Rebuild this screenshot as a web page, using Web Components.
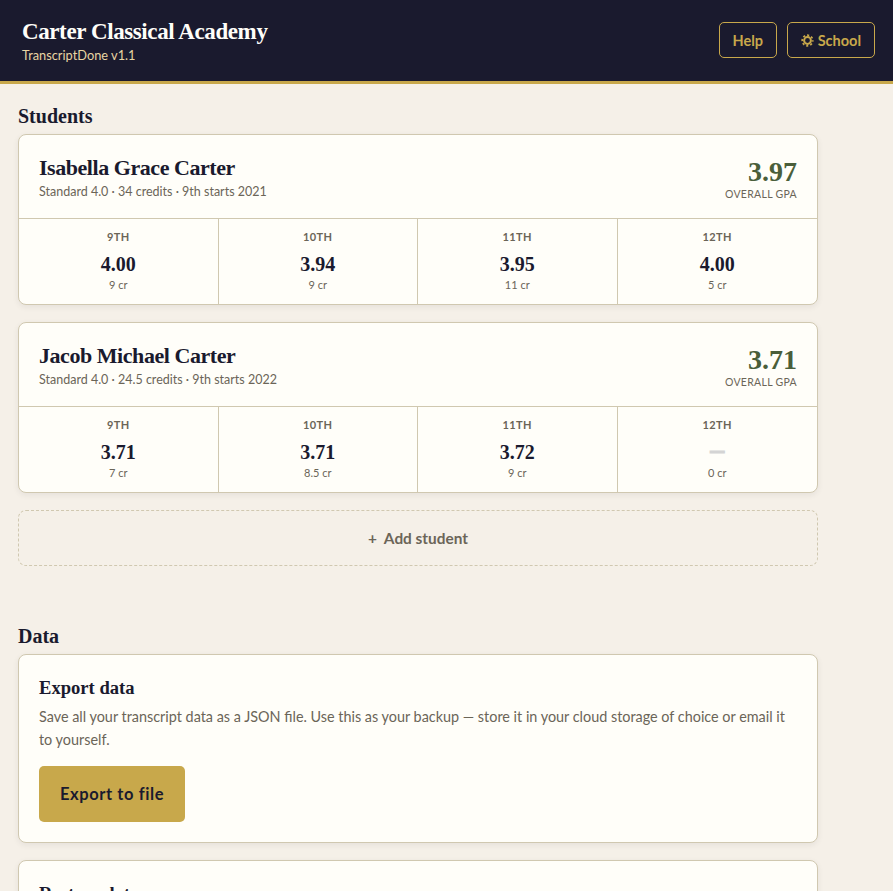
<!DOCTYPE html>
<html lang="en">
<head>
<meta charset="utf-8">
<title>TranscriptDone</title>
<style>
html,body{margin:0;padding:0;height:891px;overflow:hidden;background:#f5f0e8}
body{font-family:Lato,"Noto Sans",sans-serif;color:#1a1a2e}
</style>
</head>
<body>
<app-shell>
  <app-header slot="header" name="Carter Classical Academy" sub="TranscriptDone v1.1">
    <hdr-btn>Help</hdr-btn>
    <hdr-btn><gear-icon></gear-icon> School</hdr-btn>
  </app-header>
  <sec-title>Students</sec-title>
  <student-card name="Isabella Grace Carter" meta="Standard 4.0 · 34 credits · 9th starts 2021" gpa="3.97">
    <year-cell label="9TH" gpa="4.00" cr="9 cr"></year-cell>
    <year-cell label="10TH" gpa="3.94" cr="9 cr"></year-cell>
    <year-cell label="11TH" gpa="3.95" cr="11 cr"></year-cell>
    <year-cell label="12TH" gpa="4.00" cr="5 cr"></year-cell>
  </student-card>
  <student-card name="Jacob Michael Carter" meta="Standard 4.0 · 24.5 credits · 9th starts 2022" gpa="3.71">
    <year-cell label="9TH" gpa="3.71" cr="7 cr"></year-cell>
    <year-cell label="10TH" gpa="3.71" cr="8.5 cr"></year-cell>
    <year-cell label="11TH" gpa="3.72" cr="9 cr"></year-cell>
    <year-cell label="12TH" gpa="—" cr="0 cr" empty></year-cell>
  </student-card>
  <add-student>+&nbsp; Add student</add-student>
  <sec-title gap>Data</sec-title>
  <data-card heading="Export data">
    Save all your transcript data as a JSON file. Use this as your backup — store it in your cloud storage of choice or email it to yourself.
    <gold-btn slot="action">Export to file</gold-btn>
  </data-card>
  <data-card heading="Restore data"></data-card>
</app-shell>
<script>
const SERIF='"Liberation Serif","Times New Roman",serif';
function def(tag,html,init){
  customElements.define(tag,class extends HTMLElement{
    constructor(){super();this.attachShadow({mode:'open'}).innerHTML=html}
    connectedCallback(){
      this.shadowRoot.querySelectorAll('[data-a]').forEach(n=>{n.textContent=this.getAttribute(n.dataset.a)||''});
      if(init)init.call(this);
    }
  });
}
def('app-shell',`<style>
:host{display:block}
main{padding:20px 75px 0 18px;display:flex;flex-direction:column}
</style><slot name="header"></slot><main><slot></slot></main>`);
def('app-header',`<style>
:host{display:flex;align-items:center;justify-content:space-between;height:81px;box-sizing:content-box;background:#1a1a2e;border-bottom:3px solid #c8a84b;padding:0 18px 0 22px}
.t{font:700 23px/28px ${SERIF};letter-spacing:-.4px;color:#fffef9}
.s{font-size:12.8px;line-height:18px;color:#e8d5a3;margin-top:0}
.b{display:flex;gap:10px;margin-top:-1px}
</style><div><div class="t" data-a="name"></div><div class="s" data-a="sub"></div></div><div class="b"><slot></slot></div>`);
def('hdr-btn',`<style>
:host{display:flex;align-items:center;height:36px;box-sizing:border-box;padding:0 13px;border:1px solid #c8a84b;border-radius:5px;color:#c8a84b;font-size:14.5px;font-weight:700;white-space:pre}
</style><slot></slot>`);
def('gear-icon',`<style>
:host{display:inline-flex;width:13px;height:13px}
svg{width:13px;height:13px;display:block}
</style><svg viewBox="0 0 13 13" fill="none" stroke="#c8a84b"><circle cx="6.5" cy="6.5" r="3.4" stroke-width="2"/><circle cx="6.5" cy="6.5" r="5.3" stroke-width="1.7" stroke-dasharray="2.1 2.06" stroke-dashoffset="1"/></svg>`);
def('sec-title',`<style>
:host{display:block;font:700 20px/24px ${SERIF};color:#1a1a2e;margin-bottom:6px}
:host([gap]){margin-top:58px}
</style><slot></slot>`);
def('student-card',`<style>
:host{display:block;background:#fffef9;border:1px solid #d0c8b0;border-radius:8px;box-shadow:0 2px 6px rgba(26,26,46,.07);margin-bottom:17px;overflow:hidden}
.h{display:flex;justify-content:space-between;height:84px;box-sizing:border-box;padding:19px 20px 0;border-bottom:1px solid #d0c8b0}
.n{font:700 22px/28px ${SERIF};letter-spacing:-.45px;color:#1a1a2e}
.m{font-size:12.5px;line-height:18px;color:#6b6558;margin-top:1px}
.r{text-align:right}
.g{font:700 28px/30px ${SERIF};color:#4a5e3a;margin-top:3px}
.l{font-size:10.5px;line-height:14px;letter-spacing:.3px;color:#6b6558}
.y{display:grid;grid-template-columns:repeat(4,1fr)}
</style><div class="h"><div><div class="n" data-a="name"></div><div class="m" data-a="meta"></div></div><div class="r"><div class="g" data-a="gpa"></div><div class="l">OVERALL GPA</div></div></div><div class="y"><slot></slot></div>`);
def('year-cell',`<style>
:host{display:block;text-align:center;border-right:1px solid #d0c8b0;padding:10px 0 12px;height:85px;box-sizing:border-box}
:host(:last-child){border-right:0}
.l{font-size:11px;line-height:16px;font-weight:700;letter-spacing:.4px;color:#6b6558}
.g{font:700 20px/26px ${SERIF};color:#1a1a2e;margin-top:6px}
:host([empty]) .g{color:#d4d4d4;font:700 16px/24px "DejaVu Sans",sans-serif;-webkit-text-stroke:1px #d4d4d4;margin-bottom:3px}
.c{font-size:11px;line-height:14px;color:#6b6558;margin-top:1px}
</style><div class="l" data-a="label"></div><div class="g" data-a="gpa"></div><div class="c" data-a="cr"></div>`);
def('add-student',`<style>
:host{display:flex;align-items:center;justify-content:center;height:56px;box-sizing:border-box;border:1px dashed #d0c8b0;border-radius:8px;color:#6b6558;font-size:15.4px;font-weight:700;padding-bottom:1px}
</style><slot></slot>`);
def('data-card',`<style>
:host{display:block;background:#fffef9;border:1px solid #d0c8b0;border-radius:8px;box-shadow:0 2px 6px rgba(26,26,46,.07);margin-bottom:17px;padding:21px 20px 20px;height:189px;box-sizing:border-box}
.t{font:700 18.6px/24px ${SERIF};color:#1a1a2e}
.p{font-size:14.4px;line-height:23px;color:#6b6558;margin-top:5px;margin-bottom:15px}
</style><div class="t" data-a="heading"></div><div class="p"><slot></slot></div><slot name="action"></slot>`);
def('gold-btn',`<style>
:host{display:inline-flex;align-items:center;justify-content:center;width:146px;height:56px;box-sizing:border-box;background:#c8a84b;border-radius:5px;color:#1a1a2e;font-size:16.5px;font-weight:700;letter-spacing:.6px}
</style><slot></slot>`);
</script>
</body>
</html>
